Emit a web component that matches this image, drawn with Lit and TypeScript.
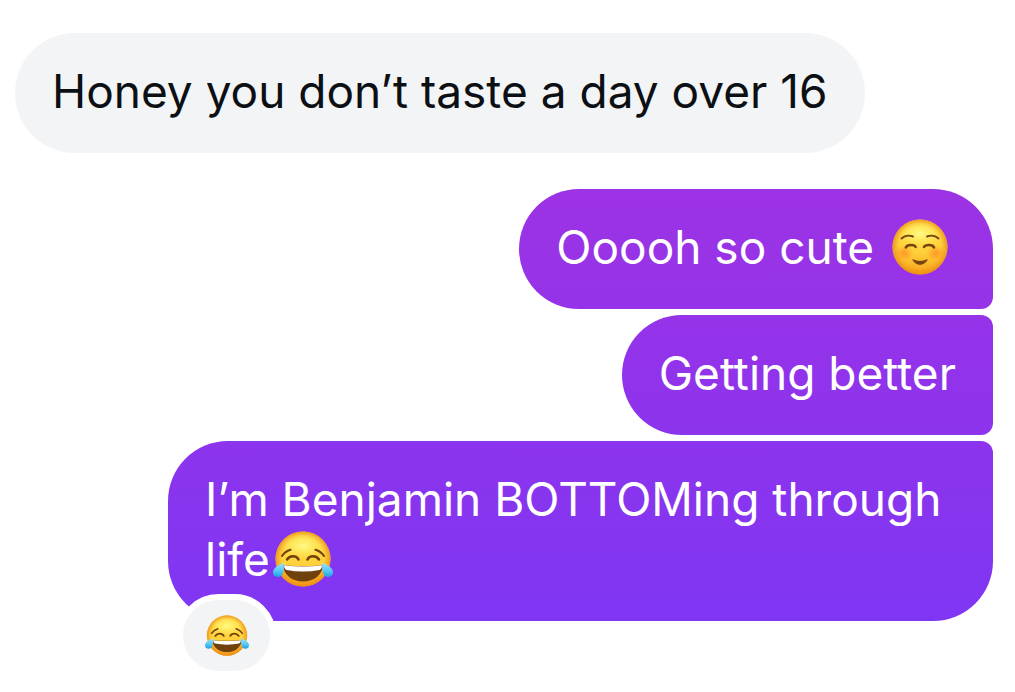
import { LitElement, html, css, svg } from "lit";
import { customElement, property } from "lit/decorators.js";

@customElement("chat-emoji")
export class ChatEmoji extends LitElement {
  static styles = css`
    :host { display: inline-block; line-height: 0; }
    .art { display: block; width: 100%; height: auto; overflow: visible; }
  `;

  @property() kind: "smile" | "joy" = "smile";

  private smile() {
    return svg`
      <ellipse cx="14" cy="34" rx="10" ry="8" fill="url(#blush)"/>
      <ellipse cx="46" cy="34" rx="10" ry="8" fill="url(#blush)"/>
      <g fill="none" stroke="#754210" stroke-linecap="round">
        <path d="M11.500 19.500Q16 15 23 17.500M37 17.500Q44 15 48.500 19.500" stroke-width="1.900"/>
        <path d="M15.800 28.500Q17 26 21 26Q25 26 25.600 28M34 28Q35 26 39 26Q43 26 44 28.500" stroke-width="2.500"/>
      </g>
      <path d="M22.500 40Q30 44 37.500 40Q38 41 36 43Q33.500 46 30 46Q26.500 46 24 43Q22 41 22.500 40Z" fill="#754210"/>`;
  }

  private joy() {
    return svg`
      <g fill="none" stroke="#70400d" stroke-linecap="round">
        <path d="M9 25Q12 20.500 17.500 18.800M42.500 18.800Q48 20.500 51 25" stroke-width="2.100"/>
        <path d="M14 28.500Q16 25.300 20 25.300Q24 25.300 25.500 28.500M34.500 28.500Q36 25.300 40 25.300Q44 25.300 46 28.500" stroke-width="2.500"/>
      </g>
      <path d="M10 34Q30 36.500 50 34C49.500 44 41 50.500 30 50.500S10.500 44 10 34Z" fill="#70400d"/>
      <path d="M11 34.300Q30 36.700 49 34.300Q49 38 46.500 39Q30 42 13.500 39Q11 38 11 34.300Z" fill="#fff"/>
      <path d="M10.500 32C4.500 34 0 37.500 0 41.500C0 44.500 2.500 46 5 46C10 46 11.500 40 10.500 32Z" fill="url(#tear)"/>
      <path d="M49.500 32C55.500 34 60 37.500 60 41.500C60 44.500 57.500 46 55 46C50 46 48.500 40 49.500 32Z" fill="url(#tear)"/>`;
  }

  render() {
    const label = this.kind === "joy" ? "Face with tears of joy" : "Smiling face";
    return html`<svg class="art" viewBox="0 0 60 56" role="img" aria-label=${label}>
      <defs>
        <linearGradient id="face" x1="0" y1="0" x2="0" y2="1">
          <stop offset="0" stop-color="#ffe150"/>
          <stop offset=".6" stop-color="#ffd03a"/>
          <stop offset="1" stop-color="#f7a01c"/>
        </linearGradient>
        <radialGradient id="edge">
          <stop offset=".75" stop-color="#ee8f14" stop-opacity="0"/>
          <stop offset="1" stop-color="#ea8712" stop-opacity=".75"/>
        </radialGradient>
        <radialGradient id="glow">
          <stop offset="0" stop-color="#fffb87"/>
          <stop offset="1" stop-color="#fff05c" stop-opacity="0"/>
        </radialGradient>
        <radialGradient id="blush">
          <stop offset="0" stop-color="#ff7414" stop-opacity=".6"/>
          <stop offset="1" stop-color="#ff7414" stop-opacity="0"/>
        </radialGradient>
        <linearGradient id="tear" x1="0" y1="0" x2="0" y2="1">
          <stop offset="0" stop-color="#9be6ff"/>
          <stop offset=".6" stop-color="#4fc4f6"/>
          <stop offset="1" stop-color="#1d9fe6"/>
        </linearGradient>
      </defs>
      <circle cx="30" cy="28" r="27.5" fill="url(#face)"/>
      <circle cx="30" cy="28" r="27.5" fill="url(#edge)"/>
      <ellipse cx="30" cy="15" rx="22" ry="13" fill="url(#glow)"/>
      ${this.kind === "joy" ? this.joy() : this.smile()}
    </svg>`;
  }
}

@customElement("app-root")
export class AppRoot extends LitElement {
  static styles = css`
    :host {
      display: block;
      min-height: 100vh;
      background: #fff;
      font-family: Inter, "Liberation Sans", sans-serif;
      font-size: 46px;
      font-weight: 400;
      line-height: 60px;
    }
    .thread {
      display: flex;
      flex-direction: column;
      gap: 36px;
      padding: 33px 22px 20px 15px;
    }
    .group { display: flex; flex-direction: column; gap: 6px; }
    .sent { align-items: flex-end; }
    .received { align-items: flex-start; }
    .bubble {
      box-sizing: border-box;
      position: relative;
      max-width: 88%;
      margin: 0;
      padding: 28px 37px 32px;
      border-radius: 60px;
    }
    .received .bubble { background: #f3f4f6; color: #0c1014; }
    .sent .bubble {
      max-width: min(100%, 825px);
      color: #fff;
      background: linear-gradient(#9f33e2 20%, #9333ea 50%, #7f36f3 90%) fixed;
      border-bottom-right-radius: 12px;
    }
    .sent .bubble + .bubble { border-top-right-radius: 12px; }
    .sent .bubble:last-child { border-bottom-right-radius: 60px; }
    .inline { width: 60px; margin: 0 6px 0 3px; vertical-align: -11px; }
    .reaction {
      position: absolute;
      left: 9px;
      bottom: -56px;
      display: flex;
      align-items: center;
      justify-content: center;
      box-sizing: border-box;
      width: 99px;
      height: 83px;
      padding: 0;
      border: 6px solid #fff;
      border-radius: 42px;
      background: #f3f4f6;
    }
    .small { width: 44px; }
  `;

  render() {
    return html`<main class="thread">
      <section class="group received">
        <p class="bubble">Honey you don’t taste a day over 16</p>
      </section>
      <section class="group sent">
        <p class="bubble">Ooooh so cute <chat-emoji class="inline" kind="smile"></chat-emoji></p>
        <p class="bubble">Getting better</p>
        <p class="bubble">I’m Benjamin BOTTOMing through life<chat-emoji class="inline" kind="joy"></chat-emoji>
          <button class="reaction" type="button" aria-label="Reactions"><chat-emoji class="small" kind="joy"></chat-emoji></button>
        </p>
      </section>
    </main>`;
  }
}
